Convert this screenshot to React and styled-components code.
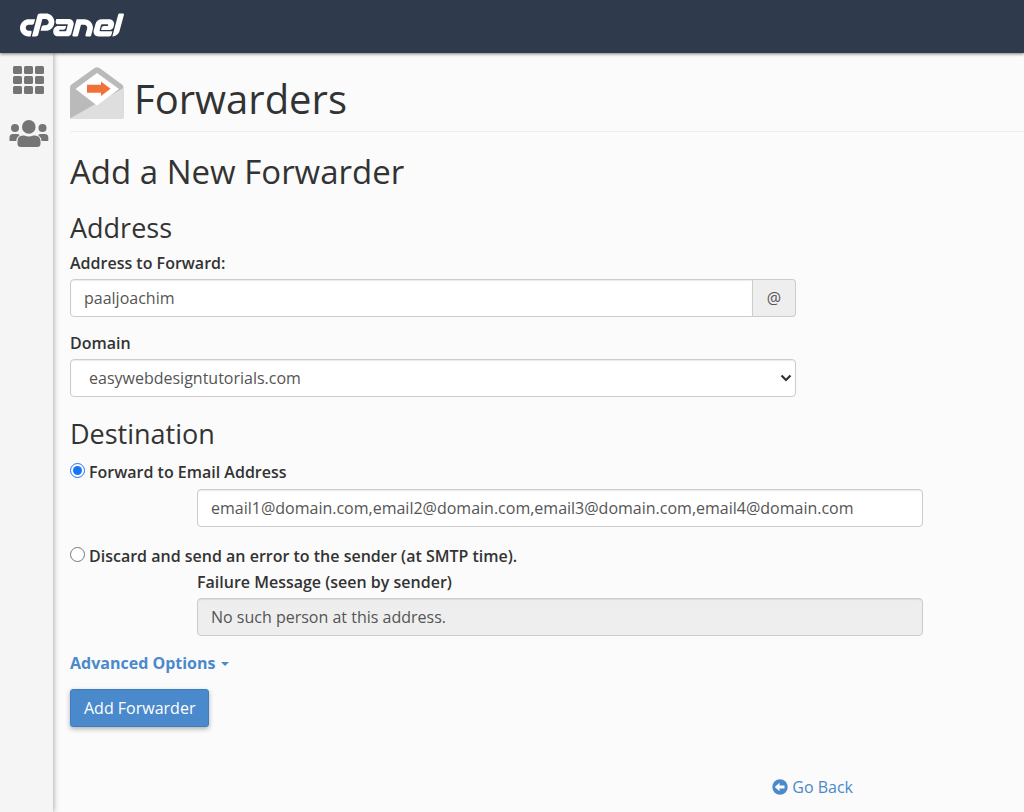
import { useState } from 'react';
import styled, { createGlobalStyle } from 'styled-components';
import { FaCpanel } from 'react-icons/fa';

const colors = {
  header: '#2f3b4c',
  page: '#fbfbfb',
  sidebar: '#f5f5f5',
  text: '#333',
  field: '#555',
  border: '#ccc',
  disabled: '#eee',
  icon: '#757575',
  primary: '#4a89cb',
};

const GlobalStyle = createGlobalStyle`
  * {
    box-sizing: border-box;
  }
  body {
    margin: 0;
    background: ${colors.page};
    color: ${colors.text};
    font-family: 'Open Sans', sans-serif;
    font-size: 16px;
    line-height: 24px;
  }
`;

const Page = styled.div`
  display: flex;
  flex-direction: column;
  min-height: 100vh;
`;
const TopBar = styled.header`
  display: flex;
  align-items: center;
  height: 53px;
  padding: 0 20px 2px;
  background: ${colors.header};
  box-shadow: 0 1px 3px rgba(0, 0, 0, 0.5);
  z-index: 1;
`;
const LogoLink = styled.a`
  display: flex;
  color: white;
`;
const Logo = styled(FaCpanel)`
  width: 104px;
  height: 84px;
`;
const Body = styled.div`
  display: flex;
  flex: 1;
`;
const Sidebar = styled.nav`
  display: flex;
  flex-direction: column;
  align-items: center;
  gap: 26px;
  flex: none;
  width: 53px;
  padding: 13px 0 0 4px;
  background: ${colors.sidebar};
  box-shadow: 1px 0 5px rgba(0, 0, 0, 0.3);
`;
const SidebarLink = styled.a`
  display: flex;
  color: ${colors.icon};
`;
const Main = styled.main`
  flex: 1;
  min-width: 0;
  padding: 14px 0 12px 17px;
`;
const PageHeader = styled.div`
  display: flex;
  gap: 10px;
  padding-bottom: 8px;
  border-bottom: 1px solid #eee;
`;
const PageTitle = styled.h1`
  margin: 8px 0 0;
  font-size: 40px;
  font-weight: 400;
  line-height: 48px;
`;
const Title = styled.h2`
  margin: 21px 0;
  font-size: 33px;
  font-weight: 400;
  line-height: 38px;
`;
const SectionTitle = styled.h3`
  margin: 21px 0 7px;
  font-size: 27px;
  font-weight: 400;
  line-height: 32px;
`;
const Label = styled.label`
  display: block;
  margin-bottom: 4px;
  font-size: 16px;
  font-weight: 600;
  line-height: 24px;
`;
const Group = styled.div`
  max-width: 726px;
  margin-bottom: 14px;
`;
const IndentedGroup = styled(Group)`
  max-width: 853px;
  margin-bottom: 17px;
  padding-left: 127px;
`;
const InputGroup = styled.div`
  display: flex;
`;
const Input = styled.input`
  flex: 1;
  width: 100%;
  min-width: 0;
  height: 38px;
  padding: 0 13px;
  border: 1px solid ${colors.border};
  border-radius: ${({ $joined }) => ($joined ? '4px 0 0 4px' : '4px')};
  background: white;
  box-shadow: inset 0 1px 1px rgba(0, 0, 0, 0.08);
  color: ${colors.field};
  font: inherit;
  &:disabled {
    background: ${colors.disabled};
  }
`;
const Addon = styled.span`
  width: 43px;
  border: 1px solid ${colors.border};
  border-left: 0;
  border-radius: 0 4px 4px 0;
  background: ${colors.disabled};
  color: ${colors.field};
  line-height: 36px;
  text-align: center;
`;
const SelectBox = styled.div`
  display: grid;
  align-items: center;
  svg {
    grid-area: 1 / 1;
    justify-self: end;
    margin-right: 4px;
    pointer-events: none;
  }
`;
const Select = styled.select`
  grid-area: 1 / 1;
  width: 100%;
  height: 38px;
  padding: 0 18px;
  appearance: none;
  border: 1px solid ${colors.border};
  border-radius: 4px;
  background: white;
  box-shadow: inset 0 1px 1px rgba(0, 0, 0, 0.08);
  color: ${colors.field};
  font: inherit;
`;
const RadioRow = styled.div`
  display: flex;
  align-items: flex-start;
  gap: 4px;
  margin-top: 10px;
`;
const Radio = styled.input`
  width: 15px;
  height: 15px;
  margin: 3px 0 0;
  accent-color: #1a73f5;
`;
const RadioLabel = styled(Label)`
  margin-bottom: ${({ $tight }) => ($tight ? '2px' : '5px')};
`;
const AdvancedButton = styled.button`
  display: flex;
  align-items: center;
  gap: 6px;
  margin-bottom: 16px;
  padding: 0;
  border: 0;
  background: none;
  color: ${colors.primary};
  font: inherit;
  font-weight: 700;
  line-height: 20px;
  cursor: pointer;
`;
const Caret = styled.span`
  margin-top: 2px;
  border-top: 4px solid;
  border-right: 4px solid transparent;
  border-left: 4px solid transparent;
`;
const SubmitButton = styled.button`
  height: 38px;
  padding: 0 13px;
  border: 1px solid #3f7dbf;
  border-radius: 3px;
  background: ${colors.primary};
  box-shadow: 0 2px 5px rgba(0, 0, 0, 0.3);
  color: white;
  font: inherit;
  cursor: pointer;
`;
const BackRow = styled.div`
  display: flex;
  justify-content: flex-end;
  max-width: 783px;
  margin-top: 48px;
`;
const BackLink = styled.a`
  display: flex;
  align-items: center;
  gap: 4px;
  color: ${colors.primary};
  text-decoration: none;
`;

const GridIcon = () => (
  <svg width="31" height="28" viewBox="0 0 31 28" fill="currentColor">
    {[0, 10, 20].map((y) =>
      [0, 11, 22].map((x) => (
        <rect key={`${x}-${y}`} x={x} y={y} width="9" height="8" rx="1.5" />
      ))
    )}
  </svg>
);

const UsersIcon = () => (
  <svg width="40" height="28" viewBox="0 0 40 28" fill="currentColor">
    <circle cx="6" cy="8" r="4" />
    <circle cx="33.5" cy="8" r="4" />
    <circle cx="19.8" cy="6.9" r="6.8" />
    <path d="M0.5 21v-3.5q0-3.5 3.5-3.5h4q1.7 0 2.7 1-3 2-3.5 6z" />
    <path d="M39.3 21v-3.5q0-3.5-3.5-3.5h-4q-1.7 0-2.7 1 3 2 3.5 6z" />
    <path d="M14 15.5h1.2q4.6 2 9.2 0H25.5q6 0 6 6v2q0 3.5-3.5 3.5H12q-3.5 0-3.5-3.5v-2q0-6 5.5-6z" />
  </svg>
);

const ForwardersIcon = () => (
  <svg width="54" height="53" viewBox="0 0 54 53">
    <path
      d="M0 20.5q0-2 1.5-3L24.5 1q2.5-1.6 5 0L52 17.5q1.5 1 1.5 3V50q0 2-2 2H2q-2 0-2-2z"
      fill="#bababa"
    />
    <path d="M53.5 21V50q0 2-2 2H2q-1 0-1.6-.7z" fill="#dedede" />
    <path d="M27 6 49 22 27 38.5 5.5 22z" fill="white" />
    <path d="M17 17.7h14V14.5L40.5 21.7 31 29v-3.2H17z" fill="#f0713a" />
  </svg>
);

const ChevronIcon = () => (
  <svg width="12" height="8" viewBox="0 0 12 8" fill="none">
    <path d="M1.5 1.5 6 6l4.5-4.5" stroke="#333" strokeWidth="2.2" />
  </svg>
);

const BackIcon = () => (
  <svg width="16" height="16" viewBox="0 0 16 16">
    <circle cx="8" cy="8" r="7.7" fill="currentColor" />
    <path d="M2.8 8 7.5 3.8v2.7H12.5v3H7.5v2.7z" fill="white" />
  </svg>
);

const App = () => {
  const [address, setAddress] = useState('paaljoachim');
  const [destination, setDestination] = useState('forward');
  const [emails, setEmails] = useState(
    'email1@domain.com,email2@domain.com,email3@domain.com,email4@domain.com'
  );
  const [message, setMessage] = useState('No such person at this address.');

  return (
    <>
      <GlobalStyle />
      <Page>
        <TopBar>
          <LogoLink href="#home" aria-label="cPanel">
            <Logo />
          </LogoLink>
        </TopBar>
        <Body>
          <Sidebar>
            <SidebarLink href="#tools" aria-label="Tools">
              <GridIcon />
            </SidebarLink>
            <SidebarLink href="#users" aria-label="Users">
              <UsersIcon />
            </SidebarLink>
          </Sidebar>
          <Main>
            <PageHeader>
              <ForwardersIcon />
              <PageTitle>Forwarders</PageTitle>
            </PageHeader>
            <Title>Add a New Forwarder</Title>
            <form onSubmit={(e) => e.preventDefault()}>
              <SectionTitle>Address</SectionTitle>
              <Group>
                <Label htmlFor="address">Address to Forward:</Label>
                <InputGroup>
                  <Input
                    id="address"
                    $joined
                    value={address}
                    onChange={(e) => setAddress(e.target.value)}
                  />
                  <Addon>@</Addon>
                </InputGroup>
              </Group>
              <Group>
                <Label htmlFor="domain">Domain</Label>
                <SelectBox>
                  <Select id="domain">
                    <option>easywebdesigntutorials.com</option>
                  </Select>
                  <ChevronIcon />
                </SelectBox>
              </Group>
              <SectionTitle>Destination</SectionTitle>
              <RadioRow>
                <Radio
                  type="radio"
                  id="forward"
                  name="destination"
                  checked={destination === 'forward'}
                  onChange={() => setDestination('forward')}
                />
                <RadioLabel htmlFor="forward">
                  Forward to Email Address
                </RadioLabel>
              </RadioRow>
              <IndentedGroup>
                <Input
                  aria-label="Email addresses"
                  value={emails}
                  onChange={(e) => setEmails(e.target.value)}
                />
              </IndentedGroup>
              <RadioRow>
                <Radio
                  type="radio"
                  id="discard"
                  name="destination"
                  checked={destination === 'discard'}
                  onChange={() => setDestination('discard')}
                />
                <RadioLabel htmlFor="discard" $tight>
                  Discard and send an error to the sender (at SMTP time).
                </RadioLabel>
              </RadioRow>
              <IndentedGroup>
                <Label htmlFor="message">Failure Message (seen by sender)</Label>
                <Input
                  id="message"
                  disabled={destination !== 'discard'}
                  value={message}
                  onChange={(e) => setMessage(e.target.value)}
                />
              </IndentedGroup>
              <AdvancedButton type="button">
                Advanced Options
                <Caret />
              </AdvancedButton>
              <SubmitButton type="submit">Add Forwarder</SubmitButton>
            </form>
            <BackRow>
              <BackLink href="#forwarders">
                <BackIcon />
                Go Back
              </BackLink>
            </BackRow>
          </Main>
        </Body>
      </Page>
    </>
  );
};

export default App;
